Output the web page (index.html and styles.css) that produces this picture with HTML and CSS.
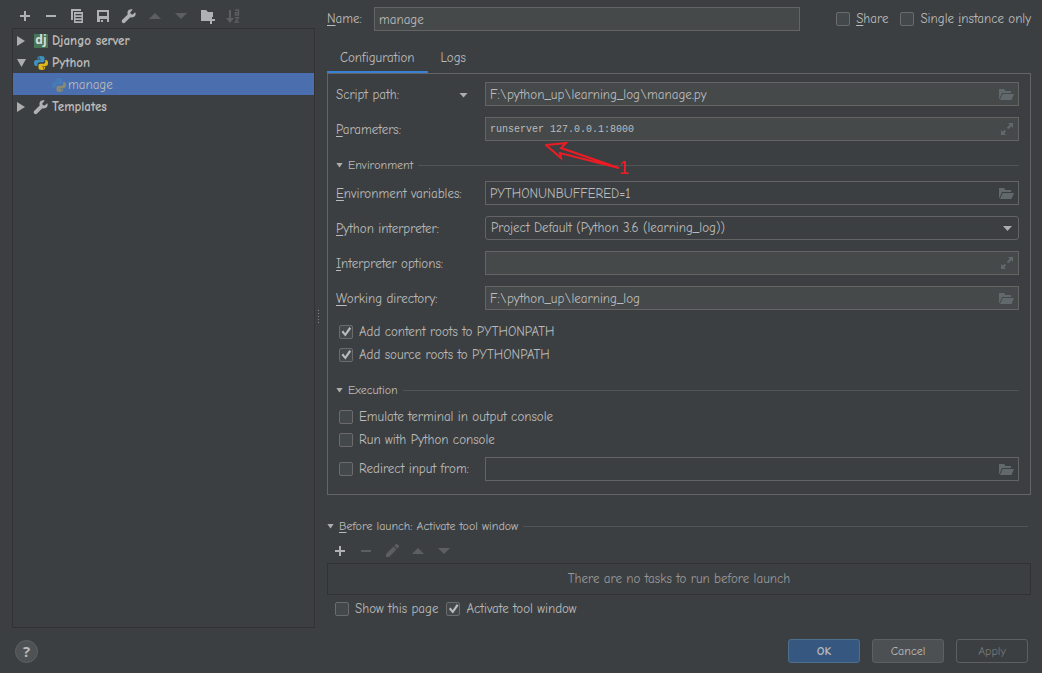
FILE: index.html
```html
<!DOCTYPE html>
<html lang="en">
<head>
<meta charset="utf-8">
<title>Run/Debug Configurations</title>
<link rel="stylesheet" href="styles.css">
</head>
<body>
<svg class="defs" aria-hidden="true">
  <symbol id="add" viewBox="0 0 16 16"><path d="M7 3h2v4h4v2H9v4H7V9H3V7h4z"/></symbol>
  <symbol id="remove" viewBox="0 0 16 16"><path d="M3 7h10v2H3z"/></symbol>
  <symbol id="copy" viewBox="0 0 16 16"><path d="M2 1h10v2H4v9H2z"/><path fill-rule="evenodd" d="M5 4h9v11H5zM6.500 6v1.200h6V6zm0 3v1.200h6V9zm0 3v1.200h6V12z"/></symbol>
  <symbol id="save" viewBox="0 0 16 16"><path fill-rule="evenodd" d="M2 2h12v12h-2v-3H5v3H2zM4 4v4h8V4z"/><path d="M6 12h2v2H6z"/></symbol>
  <symbol id="wrench" viewBox="0 0 16 16"><path d="M14.200 4.200 11.700 6.500 9.700 6.100 9.300 4.200 11.700 1.700C9.700.8 7.400 1.700 6.700 3.600c-.4 1-.3 2 0 2.900L1.300 11.800c-.8.8-.8 2 0 2.800s2 .8 2.800 0l5.300-5.400c1.700.7 3.700.1 4.700-1.400.7-1.100.7-2.500.1-3.600z"/></symbol>
  <symbol id="up" viewBox="0 0 16 16"><path d="M8 5l6 6H2z"/></symbol>
  <symbol id="down" viewBox="0 0 16 16"><path d="M2 5h12l-6 6z"/></symbol>
  <symbol id="folder-add" viewBox="0 0 16 16"><path d="M2 2h5l2 2h5v5h-3v2H9v2H2z"/><path d="M11 9h2v2h3v2h-3v3h-2v-3H9v-2h2z"/></symbol>
  <symbol id="sort" viewBox="0 0 16 16"><path d="M4 2h2v8h3l-4 5-4-5h3z"/><path d="M10 2h3.500v5h-3V4.700h3M10 9.700h3.500L10.300 14H14" fill="none" stroke="currentColor" stroke-width="1.300"/></symbol>
  <symbol id="edit" viewBox="0 0 16 16"><path d="M2 11l7.500-7.500 3 3L5 14H2zM10.300 2.700l1.700-1.500q.8-.6 1.500 0l1.300 1.300q.6.700 0 1.500l-1.500 1.700z"/></symbol>
  <symbol id="folder" viewBox="0 0 16 16"><path d="M1 2h5l1.500 2H13v2H4l-2.500 6H1z"/><path d="M4.700 7H16l-2.500 6H2z"/></symbol>
  <symbol id="expand" viewBox="0 0 16 16"><path d="M10 1h5v5l-1.700-1.700-3 3-1.500-1.500 3-3zM3 8l1.700 1.700 2-2 1.500 1.500-2 2L8 13H3z"/></symbol>
  <symbol id="python" viewBox="0 0 16 16"><path fill="#3f92be" fill-rule="evenodd" d="M8 1C5.700 1 4.500 1.800 4.500 3v1.500H8V5H3C1.700 5 1 6.200 1 8s.8 3 2 3h1.500V9.300C4.500 8 5.500 7.300 6.700 7.300h3c1 0 1.800-.8 1.800-1.800V3c0-1.200-1.200-2-3.500-2zM6.200 2.300a.7.700 0 1 1 0 1.400.7.7 0 0 1 0-1.400z"/><path fill="#e0b61b" fill-rule="evenodd" d="M12.300 5v1.700c0 1.300-1 2.100-2.200 2.100h-3c-1 0-1.600.8-1.600 1.700V13c0 1.300 1.200 2 3.300 2s3.400-.8 3.400-2v-1.500H9V11h4c1.300 0 2-1 2-3s-.7-3-1.800-3zM10.700 12.300a.7.700 0 1 1 0 1.400.7.700 0 0 1 0-1.400z"/></symbol>
</svg>

<main class="workspace">
  <aside class="sidebar">
    <div class="toolbar">
      <button class="tool" aria-label="Add"><svg><use href="#add"/></svg></button>
      <button class="tool" aria-label="Remove"><svg><use href="#remove"/></svg></button>
      <button class="tool" aria-label="Copy"><svg><use href="#copy"/></svg></button>
      <button class="tool" aria-label="Save"><svg><use href="#save"/></svg></button>
      <button class="tool" aria-label="Edit templates"><svg><use href="#wrench"/></svg></button>
      <button class="tool" aria-label="Move up" disabled><svg><use href="#up"/></svg></button>
      <button class="tool" aria-label="Move down" disabled><svg><use href="#down"/></svg></button>
      <button class="tool" aria-label="New folder"><svg><use href="#folder-add"/></svg></button>
      <button class="tool" aria-label="Sort" disabled><svg><use href="#sort"/></svg></button>
    </div>
    <ul class="tree">
      <li class="node"><button class="toggle" aria-label="Expand"></button><span class="django">dj</span><span>Django server</span></li>
      <li class="node"><button class="toggle open" aria-label="Collapse"></button><svg><use href="#python"/></svg><span>Python</span></li>
      <li class="node child"><svg><use href="#python"/></svg><span>manage</span></li>
      <li class="node"><button class="toggle" aria-label="Expand"></button><svg><use href="#wrench"/></svg><span>Templates</span></li>
    </ul>
  </aside>
  <div class="splitter"></div>

  <section class="editor">
    <div class="name-row">
      <label for="name"><u>N</u>ame:</label>
      <input class="field" id="name" type="text" value="manage">
      <div class="name-options">
        <label class="check"><input type="checkbox"><span><u>S</u>hare</span></label>
        <label class="check"><input type="checkbox"><span>Single <u>i</u>nstance only</span></label>
      </div>
    </div>

    <div class="tabs" role="tablist">
      <button class="tab active" role="tab" aria-selected="true">Configuration</button>
      <button class="tab" role="tab" aria-selected="false">Logs</button>
    </div>

    <div class="panel">
      <div class="row">
        <label class="with-arrow" for="script">Script path:<span class="arrow"></span></label>
        <div class="control"><input class="field" id="script" type="text" value="F:\python_up\learning_log\manage.py"><button class="browse" aria-label="Browse"><svg><use href="#folder"/></svg></button></div>
      </div>
      <div class="row">
        <label for="params"><u>P</u>arameters:</label>
        <div class="control"><input class="field mono" id="params" type="text" value="runserver 127.0.0.1:8000"><button class="browse" aria-label="Expand field"><svg><use href="#expand"/></svg></button>
          <svg class="annotation" viewBox="0 0 90 40"><path d="M1 4l20-2-5 5 58 20-59-15 1 5z"/><text x="74" y="33">1</text></svg>
        </div>
      </div>
      <h2 class="section"><span class="arrow small"></span><span>Environment</span></h2>
      <div class="row">
        <label for="env"><u>E</u>nvironment variables:</label>
        <div class="control"><input class="field plain" id="env" type="text" value="PYTHONUNBUFFERED=1"><button class="browse" aria-label="Browse"><svg><use href="#folder"/></svg></button></div>
      </div>
      <div class="row">
        <label for="interpreter"><u>P</u>ython interpreter:</label>
        <div class="control"><select class="field plain" id="interpreter"><option>Project Default (Python 3.6 (learning_log))</option></select><span class="arrow select-arrow"></span></div>
      </div>
      <div class="row">
        <label for="options"><u>I</u>nterpreter options:</label>
        <div class="control"><input class="field" id="options" type="text"><button class="browse" aria-label="Expand field"><svg><use href="#expand"/></svg></button></div>
      </div>
      <div class="row">
        <label for="workdir"><u>W</u>orking directory:</label>
        <div class="control"><input class="field" id="workdir" type="text" value="F:\python_up\learning_log"><button class="browse" aria-label="Browse"><svg><use href="#folder"/></svg></button></div>
      </div>
      <div class="checks">
        <label class="check"><input type="checkbox" checked><span>Add content roots to PYTHONPATH</span></label>
        <label class="check"><input type="checkbox" checked><span>Add source roots to PYTHONPATH</span></label>
      </div>
      <h2 class="section execution"><span class="arrow small"></span><span>Execution</span></h2>
      <div class="checks lower">
        <label class="check"><input type="checkbox"><span>Emulate terminal in output console</span></label>
        <label class="check"><input type="checkbox"><span>Run with Python console</span></label>
      </div>
      <div class="row redirect">
        <label class="check"><input type="checkbox"><span>Redirect input from:</span></label>
        <div class="control"><input class="field plain" type="text" aria-label="Redirect input file"><button class="browse" aria-label="Browse"><svg><use href="#folder"/></svg></button></div>
      </div>
    </div>

    <h2 class="section launch"><span class="arrow small"></span><span><u>B</u>efore launch: Activate tool window</span></h2>
    <div class="toolbar tasks-bar">
      <button class="tool" aria-label="Add task"><svg><use href="#add"/></svg></button>
      <button class="tool" aria-label="Remove task" disabled><svg><use href="#remove"/></svg></button>
      <button class="tool" aria-label="Edit task" disabled><svg><use href="#edit"/></svg></button>
      <button class="tool" aria-label="Move task up" disabled><svg><use href="#up"/></svg></button>
      <button class="tool" aria-label="Move task down" disabled><svg><use href="#down"/></svg></button>
    </div>
    <div class="tasks">There are no tasks to run before launch</div>
    <div class="page-options">
      <label class="check"><input type="checkbox"><span>Show this page</span></label>
      <label class="check"><input type="checkbox" checked><span>Activate tool window</span></label>
    </div>
  </section>
</main>

<footer class="footer">
  <button class="help" aria-label="Help">?</button>
  <div class="actions">
    <button class="button primary">OK</button>
    <button class="button">Cancel</button>
    <button class="button" disabled>Apply</button>
  </div>
</footer>
</body>
</html>
```
FILE: styles.css
```css
* { box-sizing: border-box; }

body {
  margin: 0;
  min-height: 100vh;
  display: flex;
  flex-direction: column;
  background: #3c3f41;
  color: #bbbbbb;
  font: 13px/16px "Comic Sans MS", "Comic Neue", "Open Sans", sans-serif;
}

button, input, select { font: inherit; color: inherit; margin: 0; }
button { padding: 0; border: 0; background: none; }
svg { width: 16px; height: 16px; fill: currentColor; flex: none; }
u { text-underline-offset: 2px; }
.defs { display: none; }

.workspace { flex: 1; display: flex; padding: 0 11px 0 12px; }

/* Configuration tree */
.sidebar { width: 303px; display: flex; flex-direction: column; }
.toolbar { display: flex; height: 28px; padding-top: 4px; color: #afb1b3; }
.tool { width: 26px; height: 24px; display: grid; place-items: center; }
.tool:disabled { color: #5c5e60; }
.tree { flex: 1; margin: 0; padding: 0; list-style: none; border: 1px solid #323232; }
.node { display: flex; align-items: center; height: 22px; padding: 2px 0 0 4px; font-weight: 600; }
.node svg { margin: 0 3px 0 8px; color: #afb1b3; }
.toggle { width: 8px; height: 10px; background: #adadad; clip-path: polygon(0 0, 100% 50%, 0 100%); }
.toggle.open { width: 9px; height: 8px; margin-right: -1px; clip-path: polygon(0 0, 100% 0, 50% 100%); }
.django {
  width: 14px;
  height: 14px;
  margin: 0 4px 0 9px;
  background: #487858;
  color: #dddddd;
  font: bold 12px/12px "Open Sans", sans-serif;
  text-align: center;
}
.child { background: #4b6eaf; padding-left: 30px; font-weight: 400; }
.child svg { opacity: 0.4; margin-right: 1px; }

.splitter {
  width: 12px;
  height: 14px;
  margin-top: 309px;
  background: radial-gradient(circle, #85888a 0 1px, transparent 1px) 2px 0 / 3px 3px repeat-y;
}

/* Editor */
.editor { flex: 1; min-width: 0; }
.name-row { display: flex; align-items: center; padding-top: 7px; }
.name-row > label { width: 47px; }
.name-row > .field { flex: 1; min-width: 0; }
.name-options { display: flex; gap: 12px; padding-left: 36px; }
.field {
  width: 100%;
  height: 24px;
  padding: 0 4px;
  border: 1px solid #646464;
  border-radius: 0;
  outline: 0;
  background: #45494a;
}
.plain { background: #3c3f41; }
.mono { font: 10px/16px "Liberation Mono", monospace; }

.check { display: flex; align-items: center; gap: 6px; white-space: nowrap; }
.check input {
  appearance: none;
  display: grid;
  flex: none;
  width: 14px;
  height: 14px;
  border: 1px solid #6b6b6b;
  border-radius: 2px;
  background: #43494a;
}
.check input:checked::after {
  content: "";
  background: #bbbbbb;
  clip-path: polygon(12% 49%, 27% 37%, 43% 60%, 78% 8%, 93% 20%, 45% 88%);
}

.tabs { display: flex; margin-top: 12px; }
.tab { height: 30px; padding: 2px 13px 0; border-bottom: 2px solid transparent; }
.tab.active { border-color: #3880d4; }

.panel { padding: 8px 11px 13px 8px; border: 1px solid #646464; }
.row { display: grid; grid-template-columns: 149px 1fr; align-items: center; margin-bottom: 11px; }
.row > label { padding-top: 2px; }
.control { position: relative; }
.with-arrow { display: flex; align-items: center; justify-content: space-between; padding-right: 17px; }
.arrow { width: 9px; height: 5px; background: #adadad; clip-path: polygon(0 0, 100% 0, 50% 100%); }
.arrow.small { width: 7px; }
.browse { position: absolute; right: 5px; top: 5px; height: 16px; color: #62696d; }
select.field { appearance: none; padding: 0 5px; border-radius: 3px; }
.select-arrow { position: absolute; right: 7px; top: 10px; }

/* Callout pointing at the parameters value */
.annotation { position: absolute; left: 60px; top: 24px; width: 90px; height: 40px; z-index: 1; pointer-events: none; }
.annotation path { fill: none; stroke: #ed1c24; stroke-width: 2px; }
.annotation text { fill: #ed1c24; font: 18px "Liberation Sans", sans-serif; }

.section { display: flex; align-items: center; gap: 5px; margin: 16px 0 8px; font-size: 12px; font-weight: 400; }
.section::after { content: ""; flex: 1; height: 1px; background: #515456; }
.checks { display: grid; gap: 7px; padding: 3px 0 0 3px; }
.execution { margin: 19px 0 11px; }
.checks.lower { padding-top: 0; margin-bottom: 9px; }
.redirect { margin: 0; }
.redirect > .check { padding: 0 0 0 3px; }

.launch { margin: 23px 3px 0 0; }
.tasks-bar { height: 29px; padding-top: 5px; }
.tasks { height: 32px; border: 1px solid #323232; color: #999999; line-height: 30px; text-align: center; }
.page-options { display: flex; gap: 8px; padding: 6px 8px; }

/* Dialog buttons */
.footer { display: flex; align-items: center; justify-content: space-between; padding: 11px 14px 10px 15px; }
.help { width: 23px; height: 23px; border: 1px solid #5e6162; border-radius: 50%; background: #4e5254; font: bold 15px/20px "Open Sans", sans-serif; }
.actions { display: flex; gap: 12px; }
.button { width: 72px; height: 24px; border: 1px solid #5e6060; border-radius: 3px; background: #4c5052; font-size: 12px; }
.primary { background: #365880; border-color: #4c708c; font-weight: 700; }
.button:disabled { background: transparent; color: #777777; }
```
